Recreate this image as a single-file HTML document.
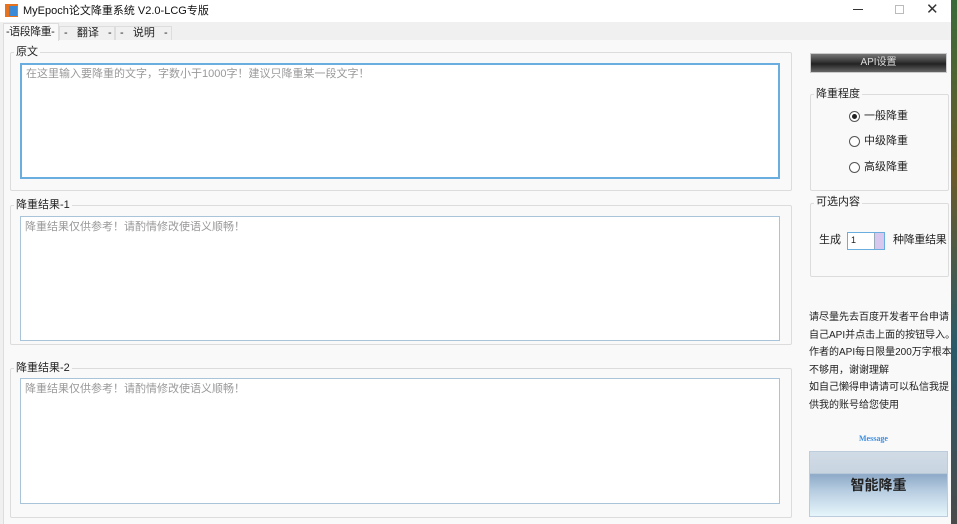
<!DOCTYPE html>
<html><head><meta charset="utf-8"><style>
*{margin:0;padding:0;box-sizing:border-box}
body{width:957px;height:524px;overflow:hidden;background:#fff;font-family:"Liberation Sans","Noto Sans CJK SC",sans-serif;font-size:11px;color:#222;position:relative}
.a{position:absolute;white-space:nowrap}
.gb{position:absolute;border:1px solid #dcdcdc;border-radius:2px}
.lb{position:absolute;background:#f9f9f9;padding:0 2px;font-size:11px;color:#222;line-height:12px}
.ta{position:absolute;background:#fff;border:1px solid #a9c3d8;color:#999;font-size:11px;padding:3px 4px;line-height:14px}
.rd{position:absolute;width:11px;height:11px;border:1px solid #555;border-radius:50%;background:#fff}
</style></head><body>
<div class="a" style="left:0;top:0;width:957px;height:22px;background:#fff"></div>
<div class="a" style="left:5px;top:4px;width:13px;height:13px;background:#e8731f"><div class="a" style="left:4px;top:2px;width:8px;height:10px;background:#3a8ad8"></div></div>
<div class="a" style="left:23px;top:4px;font-size:11px;line-height:14px;color:#111">MyEpoch论文降重系统 V2.0-LCG专版</div>
<div class="a" style="left:853px;top:9px;width:10px;height:1px;background:#333"></div>
<div class="a" style="left:895px;top:5px;width:9px;height:9px;border:1px solid #bbb"></div>
<div class="a" style="left:926px;top:1px;font-size:15px;color:#333;line-height:18px">✕</div>
<div class="a" style="left:0;top:22px;width:951px;height:502px;background:#f0f0f0"></div>
<div class="a" style="left:3px;top:40px;width:948px;height:484px;background:#f9f9f9;border-left:1px solid #ddd"></div>
<div class="a" style="left:3px;top:23px;width:56px;height:18px;background:#f9f9f9;border:1px solid #ddd;border-bottom:none;font-size:11px;line-height:16px;padding-left:2px;letter-spacing:-0.5px">-语段降重-</div>
<div class="a" style="left:59px;top:26px;width:56px;height:14px;border:1px solid #ddd;border-bottom:none;font-size:11px;line-height:13px;padding-left:4px">-&nbsp;&nbsp;&nbsp;翻译&nbsp;&nbsp;&nbsp;-</div>
<div class="a" style="left:115px;top:26px;width:57px;height:14px;border:1px solid #ddd;border-bottom:none;font-size:11px;line-height:13px;padding-left:4px">-&nbsp;&nbsp;&nbsp;说明&nbsp;&nbsp;&nbsp;-</div>

<div class="gb" style="left:10px;top:52px;width:782px;height:139px"></div>
<div class="lb" style="left:14px;top:46px">原文</div>
<div class="ta" style="left:20px;top:63px;width:760px;height:116px;border:2px solid #6aaee0;padding:2px 4px">在这里输入要降重的文字，字数小于1000字！建议只降重某一段文字！</div>

<div class="gb" style="left:10px;top:205px;width:782px;height:140px"></div>
<div class="lb" style="left:14px;top:199px">降重结果-1</div>
<div class="ta" style="left:20px;top:216px;width:760px;height:125px">降重结果仅供参考！请酌情修改使语义顺畅！</div>

<div class="gb" style="left:10px;top:368px;width:782px;height:150px"></div>
<div class="lb" style="left:14px;top:362px">降重结果-2</div>
<div class="ta" style="left:20px;top:378px;width:760px;height:126px">降重结果仅供参考！请酌情修改使语义顺畅！</div>

<div class="a" style="left:810px;top:53px;width:137px;height:20px;border:1px solid #ccc;background:linear-gradient(#777,#333 45%,#222 55%,#666);color:#ddd;text-align:center;font-size:10px;line-height:18px">API设置</div>

<div class="gb" style="left:810px;top:94px;width:139px;height:97px"></div>
<div class="lb" style="left:814px;top:88px">降重程度</div>
<div class="rd" style="left:849px;top:111px"><div class="a" style="left:2px;top:2px;width:5px;height:5px;border-radius:50%;background:#222"></div></div>
<div class="a" style="left:864px;top:110px;line-height:13px">一般降重</div>
<div class="rd" style="left:849px;top:136px"></div>
<div class="a" style="left:864px;top:135px;line-height:13px">中级降重</div>
<div class="rd" style="left:849px;top:162px"></div>
<div class="a" style="left:864px;top:161px;line-height:13px">高级降重</div>

<div class="gb" style="left:810px;top:203px;width:139px;height:74px"></div>
<div class="lb" style="left:814px;top:196px">可选内容</div>
<div class="a" style="left:819px;top:234px;line-height:13px">生成</div>
<div class="a" style="left:847px;top:232px;width:38px;height:18px;border:1px solid #6aaee0;background:#fff;font-size:9px;padding:2px 3px">1</div>
<div class="a" style="left:874px;top:233px;width:10px;height:16px;background:#d8c8f0;border-left:1px solid #9ab"></div>
<div class="a" style="left:893px;top:234px;line-height:13px;letter-spacing:-0.3px">种降重结果</div>

<div class="a" style="left:809px;top:309px;line-height:17.5px;font-size:10px">请尽量先去百度开发者平台申请<br>自己API并点击上面的按钮导入。<br>作者的API每日限量200万字根本<br>不够用，谢谢理解<br>如自己懒得申请请可以私信我提<br>供我的账号给您使用</div>
<div class="a" style="left:859px;top:434px;font-size:8px;color:#3c8de0;font-family:'Liberation Serif',serif;font-weight:bold">Message</div>
<div class="a" style="left:809px;top:451px;width:139px;height:66px;border:1px solid #bcccdc;background:linear-gradient(#d0dbe6,#c8d4e0 33%,#8eaac8 35%,#b6cce0 60%,#e6f5fb);text-align:center;font-size:14px;line-height:66px;color:#222;font-weight:bold">智能降重</div>
<div class="a" style="left:951px;top:0;width:6px;height:524px;background:linear-gradient(#3a6a3a,#6a5a2a,#2a5a6a,#4a4a4a)"></div>
</body></html>
